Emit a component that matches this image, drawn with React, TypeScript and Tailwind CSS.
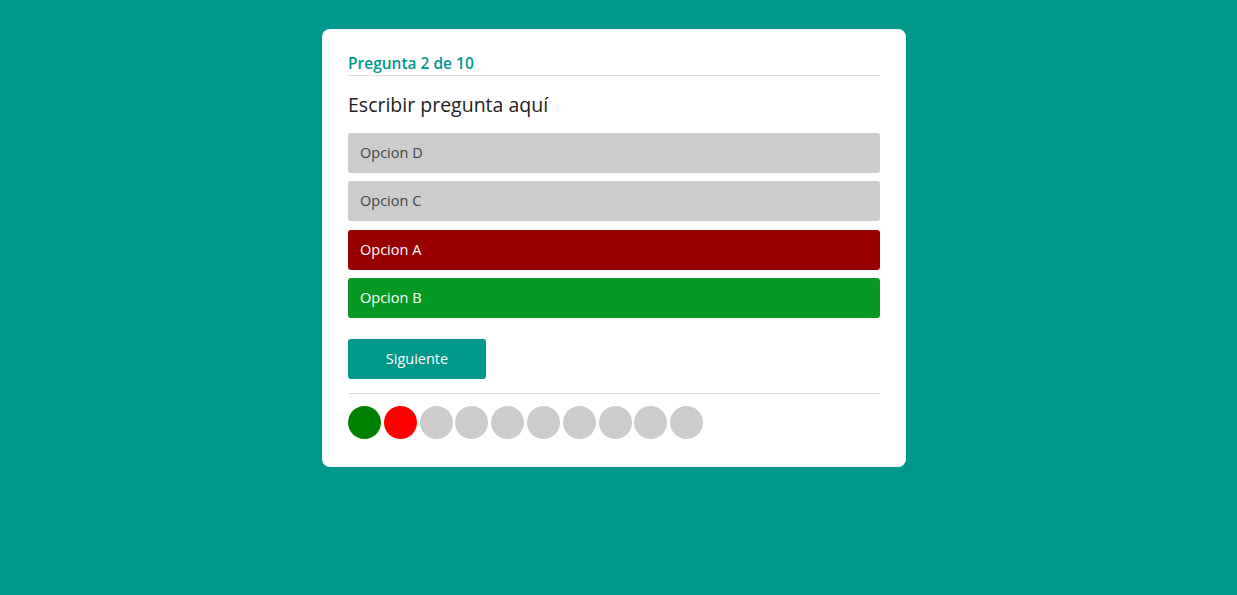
const options = [
  { label: 'Opcion D', cls: 'bg-[#cccccc] text-[#444444]' },
  { label: 'Opcion C', cls: 'bg-[#cccccc] text-[#444444]' },
  { label: 'Opcion A', cls: 'bg-[#990000] text-white' },
  { label: 'Opcion B', cls: 'bg-[#069a22] text-white' },
];

const progress = ['bg-[#008000]', 'bg-[#ff0000]', ...Array(8).fill('bg-[#cccccc]')];

export default function App() {
  return (
    <div className="min-h-[595px] bg-[#00988a] pt-[29px] font-['Open_Sans',sans-serif]">
      <div className="ml-[322px] w-[584px] rounded-[8px] bg-white px-[26px] pb-[28px] pt-[24px]">
        <h3 className="border-b border-[#dddddd] pb-[2px] text-[15.5px] font-semibold leading-[20px] text-[#00988a]">
          Pregunta 2 de 10
        </h3>
        <p className="mt-[16px] text-[19.5px] leading-[26px] text-[#222222]">Escribir pregunta aquí</p>

        <div className="mt-[15px] flex flex-col gap-[8.3px]">
          {options.map(({ label, cls }) => (
            <button
              key={label}
              className={`h-[40px] w-full rounded-[3px] px-[12px] text-left text-[14.5px] ${cls}`}
            >
              {label}
            </button>
          ))}
        </div>

        <button className="mt-[21px] h-[40px] w-[138px] rounded-[3px] bg-[#00988a] text-[14.5px] text-white">
          Siguiente
        </button>

        <div className="mt-[14px] h-px bg-[#dddddd]" />

        <div className="mt-[12px] flex gap-[2.8px]">
          {progress.map((c, i) => (
            <span key={i} className={`h-[33px] w-[33px] rounded-full ${c}`} />
          ))}
        </div>
      </div>
    </div>
  );
}
